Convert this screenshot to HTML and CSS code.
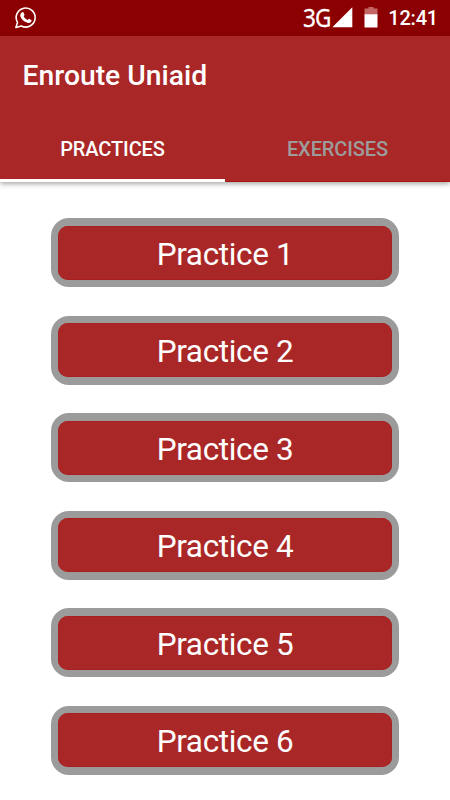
FILE: index.html
```html
<!DOCTYPE html>
<html lang="en">
<head>
<meta charset="utf-8">
<title>Enroute Uniaid</title>
<link rel="stylesheet" href="styles.css">
</head>
<body>
<div class="status">
  <svg class="whatsapp" width="24" height="24" viewBox="0 0 24 24">
    <path d="M1.900 21.500 3.500 16.400A9.500 9.500 0 1 1 7.300 20Z" fill="none" stroke="#fff" stroke-width="1.600" stroke-linejoin="round"/>
    <path d="M8.200 6.300c.5-.4 1-.3 1.300.2l1 2.200c.2.4-.7 1.300-.8 1.600.9 1.700 2.100 2.900 4 3.700.4-.2 1.100-1.300 1.500-1.200l2.100 1.200c.5.3.2 1.500-.3 2-1 1-2.200 1.200-3.500.8-3.500-1.100-5.800-3.200-7-6.100-.7-1.600-.1-3.500 1.700-4.400z" fill="#fff"/>
  </svg>
  <div class="status-right">
    <span class="network">3G</span>
    <svg class="signal" width="21" height="21" viewBox="0 0 21 21"><path d="M20.300.300V20.300H.300Z" fill="#fff"/></svg>
    <svg class="battery" width="14" height="21" viewBox="0 0 14 21"><path d="M4.500 0h5v1.500H13.500v6H.500v-6h4Z" fill="#c56666"/><path d="M.500 7.200h13V20.500H.500Z" fill="#fff"/></svg>
    <span class="clock">12:41</span>
  </div>
</div>
<header class="appbar">
  <h1 class="title">Enroute Uniaid</h1>
  <nav class="tabs">
    <a class="tab active"><span>PRACTICES</span></a>
    <a class="tab"><span>EXERCISES</span></a>
  </nav>
</header>
<main class="list">
  <button class="practice"><span class="face">Practice 1</span></button>
  <button class="practice"><span class="face">Practice 2</span></button>
  <button class="practice"><span class="face">Practice 3</span></button>
  <button class="practice"><span class="face">Practice 4</span></button>
  <button class="practice"><span class="face">Practice 5</span></button>
  <button class="practice"><span class="face">Practice 6</span></button>
</main>
</body>
</html>
```
FILE: styles.css
```css
* { box-sizing: border-box; }
body {
  margin: 0;
  height: 800px;
  overflow: hidden;
  background: #fff;
  font-family: Roboto, "Liberation Sans", sans-serif;
  color: #fff;
}
.status {
  height: 35.5px;
  padding: 0 12px 0 14px;
  background: #8b0000;
  display: flex;
  align-items: center;
  justify-content: space-between;
}
.status-right { display: flex; align-items: center; }
.network {
  font-family: "Noto Sans", sans-serif;
  font-size: 25px;
  line-height: 35px;
  letter-spacing: -1px;
  transform: scaleX(.9);
  transform-origin: right;
  -webkit-text-stroke: .3px #fff;
}
.signal { margin-left: 2px; margin-top: -1px; }
.battery { margin-left: 11px; margin-top: -1px; }
.clock {
  margin-left: 10px;
  font-size: 20px;
  font-weight: 500;
  letter-spacing: -.2px;
  line-height: 35px;
  padding-top: 2px;
}
.appbar {
  height: 146px;
  background: #aa2727;
  border-bottom: 1px solid #ab1414;
  box-shadow: 0 2px 5px rgba(0, 0, 0, .34);
}
.title {
  margin: 0;
  padding-left: 22.5px;
  height: 80px;
  line-height: 80px;
  font-size: 28.3px;
  font-weight: 500;
}
.tabs { display: flex; height: 66px; }
.tab {
  flex: 1;
  text-align: center;
  line-height: 66px;
  font-size: 20px;
  font-weight: 500;
  letter-spacing: -.1px;
  color: #9c9c9c;
}
.tab.active { color: #fff; border-bottom: 3px solid #fff; }
.list {
  display: flex;
  flex-direction: column;
  align-items: center;
  gap: 28.5px;
  padding-top: 36.8px;
}
.practice {
  display: block;
  width: 348.5px;
  height: 69px;
  flex: none;
  padding: 7.5px;
  border: 0;
  border-radius: 18px;
  background: #9b9b9b;
  color: #fff;
  font-family: inherit;
  font-size: 31.5px;
  letter-spacing: -.35px;
}
.face {
  display: block;
  height: 54px;
  border-radius: 10px;
  background: #aa2727;
  box-shadow: inset 0 0 0 .5px #a91b1b;
  line-height: 57px;
}
```
